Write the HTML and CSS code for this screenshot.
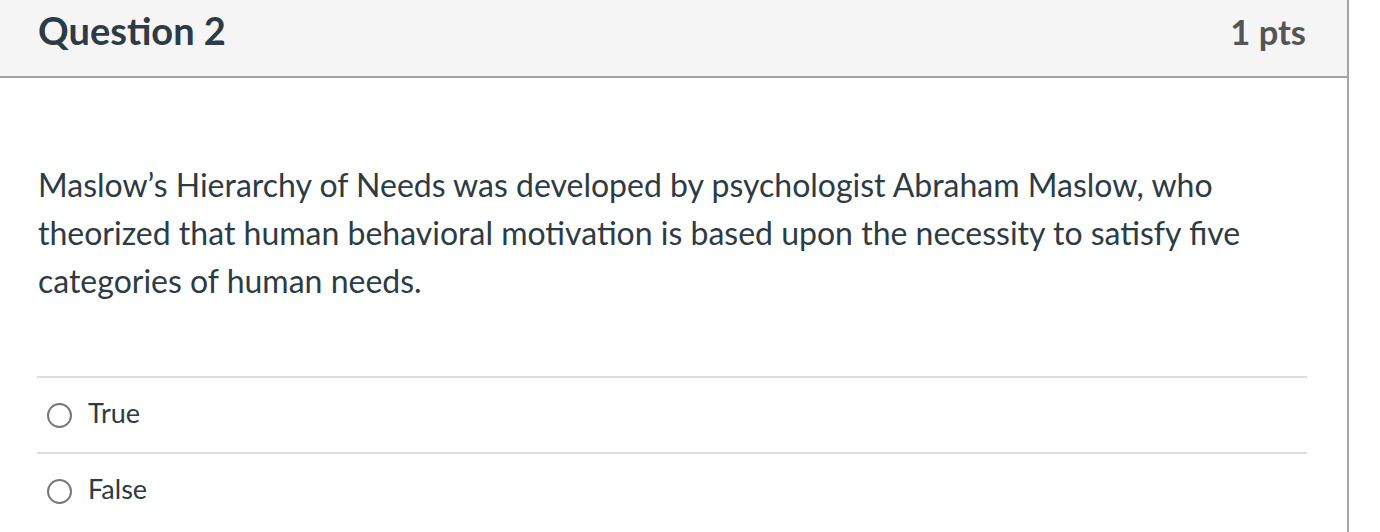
FILE: index.html
```html
<!DOCTYPE html>
<html lang="en">
<head>
<meta charset="utf-8">
<title>Question 2</title>
<link rel="stylesheet" href="styles.css">
</head>
<body>
<div class="question">
  <div class="question-header">
    <h2 class="question-title">Question 2</h2>
    <span class="question-points">1 pts</span>
  </div>
  <div class="question-body">
    <p class="question-text">Maslow’s Hierarchy of Needs was developed by psychologist Abraham Maslow, who theorized that human behavioral motivation is based upon the necessity to satisfy five categories of human needs.</p>
    <div class="answers">
      <label class="answer">
        <span class="radio"></span>
        <span class="answer-label">True</span>
      </label>
      <label class="answer">
        <span class="radio"></span>
        <span class="answer-label">False</span>
      </label>
    </div>
  </div>
</div>
</body>
</html>
```

FILE: styles.css
```css
html, body {
  margin: 0;
  padding: 0;
  background: #ffffff;
}
body {
  font-family: Lato, "Open Sans", sans-serif;
  color: #2d3b45;
}
.question {
  width: 1347px;
  min-height: 532px;
  border-right: 2px solid #a5a5a5;
  box-sizing: content-box;
}
.question-header {
  box-sizing: border-box;
  height: 78px;
  background: #f5f5f5;
  border-bottom: 2px solid #a5a5a5;
  display: flex;
  align-items: baseline;
  justify-content: space-between;
  padding: 7px 41px 0 38px;
}
.question-title {
  margin: 0;
  font-size: 38px;
  line-height: normal;
  font-weight: 700;
  color: #2d3b45;
}
.question-points {
  font-size: 34.5px;
  font-weight: 700;
  color: #555555;
}
.question-body {
  padding: 83px 40px 0 37px;
}
.question-text {
  margin: 0 0 0 1px;
  font-size: 32px;
  line-height: 48px;
  width: 1240px;
}
.answers {
  margin-top: 71px;
}
.answer {
  display: flex;
  align-items: center;
  height: 74px;
  border-top: 2px solid #dddddd;
}
.radio {
  width: 21px;
  height: 21px;
  border: 2px solid #777777;
  border-radius: 50%;
  margin-left: 10px;
  margin-right: 16px;
  flex: none;
}
.answer-label {
  font-size: 27px;
  margin-bottom: 5px;
}
```
